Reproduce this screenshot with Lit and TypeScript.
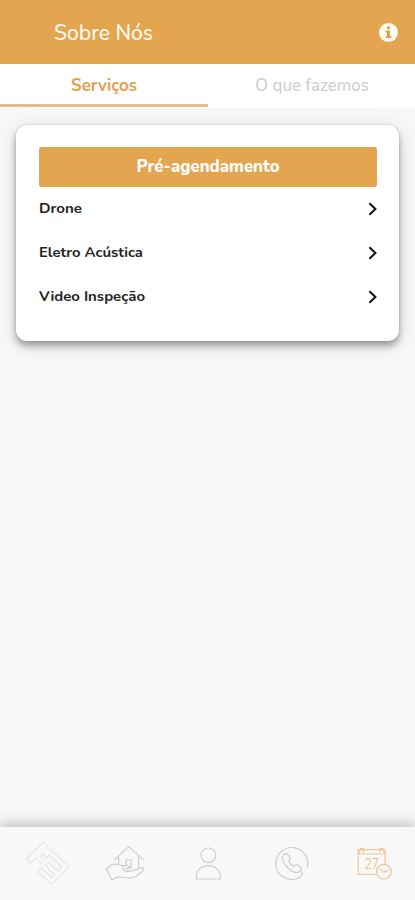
import { LitElement, html, css, svg } from "lit";
import { customElement, property, state } from "lit/decorators.js";
import { classMap } from "lit/directives/class-map.js";

const fonts = css`Nunito, "Noto Sans", "Open Sans", sans-serif`;

/* Bottom bar glyphs, drawn on a grid of three units per pixel. */
const navIcons = [
  {
    name: "Início",
    tone: "faint",
    box: "49.5 69 150 150",
    art: svg`
      <path d="M77 132 128 82 205 155 153 208 113 170 124 159 152 187 161 178 134 152 145 142 172 168 183 156 147 120 139 129 127 117 119 124 131 136 121 146 104 130 90 144Z"/>`,
  },
  {
    name: "Serviços",
    tone: "grey",
    box: "300 69 150 150",
    art: svg`
      <path d="M356 124 344 134M344 134 386 95 430 134M416 122V161M356 124V148"/>
      <path d="M378 151V135H394V158H386"/>
      <path d="M319 162 333 150Q346 145 357 150L368 152Q366 160 371 165 377 170 387 169L400 166 426 158Q433 160 429 167L410 182Q401 190 386 189L358 186Q349 185 336 195ZM368 152H382Q391 153 389 158 386 162 377 160"/>`,
  },
  {
    name: "Perfil",
    tone: "grey",
    box: "69 69 150 150",
    art: svg`
      <circle cx="145" cy="121" r="22"/>
      <path d="M109 192V186C109 166 124 152 145 152S181 166 181 186V192Z"/>`,
  },
  {
    name: "Contato",
    tone: "grey",
    box: "317.5 69 150 150",
    art: svg`
      <path d="M441 159A48 48 0 1 0 407 192C419 190 426 183 427 173"/>
      <path d="M371 119Q378 113 383 119L389 126Q392 131 386 137 388 147 401 154 407 148 412 150L421 156Q426 162 421 169 407 179 387 162 362 139 367 124Z"/>`,
  },
  {
    name: "Agenda",
    tone: "orange",
    box: "70.5 69 150 150",
    art: svg`
      <path d="M151 178H98V104H179V146M98 117H179M111 104H166"/>
      <path d="M101 114 106 100H114V112M177 114 172 100H164V112"/>
      <text class="day" x="117" y="163" textLength="44" lengthAdjust="spacingAndGlyphs">27</text>
      <circle cx="175" cy="170" r="22"/>
      <path d="M166 164 175 172 186 167"/>`,
  },
];

@customElement("service-row")
class ServiceRow extends LitElement {
  @property() label = "";
  @property({ type: Number }) span = 0;

  static styles = css`
    :host { display: flex; align-items: center; justify-content: space-between; height: 44px; }
    svg { display: block; width: 10px; height: 14px; }
    path { fill: none; stroke: #151515; stroke-width: 2.1; }
    text { font: 700 14px ${fonts}; fill: #222; }
    .text { width: 200px; height: 24px; }
  `;

  render() {
    return html`
      <svg class="text" viewBox="0 0 200 24"><text x="0" y="16.4" textLength=${this.span} lengthAdjust="spacingAndGlyphs">${this.label}</text></svg>
      <svg viewBox="0 0 10 14"><path d="M2.4 1.2 8.4 7 2.4 12.8" /></svg>
    `;
  }
}

@customElement("app-root")
class AppRoot extends LitElement {
  @state() tab = 0;

  static styles = css`
    :host { display: flex; flex-direction: column; height: 900px; overflow: hidden; background: #f8f8f8; font-family: ${fonts}; }
    svg { display: block; }
    header { display: flex; align-items: center; justify-content: space-between; box-sizing: border-box; height: 64px; padding: 0 17px 0 54px; background: #e3a54f; flex: none; }
    .title { width: 120px; height: 36px; fill: #fffaf2; font-size: 22px; font-weight: 500; }
    .info { width: 19px; height: 19px; }
    .tabs { display: flex; box-sizing: border-box; height: 44px; padding-bottom: 1px; background: #fff; flex: none; }
    .tab { flex: 1; box-sizing: border-box; border-bottom: 3px solid transparent; fill: #cfcfcf; font-size: 17px; font-weight: 500; }
    .tab svg { width: 100%; height: 40px; }
    .active { border-color: #e6bd88; fill: #e2a14c; font-weight: 700; }
    main { flex: 1; padding: 17px 16px 0; background: #f8f8f8; }
    .card { box-sizing: border-box; height: 216px; padding: 22px 22px 0 23px; border-radius: 11px; background: #fff; box-shadow: 0 5px 7px rgba(0, 0, 0, .32), 0 4px 22px rgba(0, 0, 0, .12), 0 0 2px rgba(0, 0, 0, .18); }
    .book { height: 40px; border-radius: 3px; background: #e3a54f; fill: #fff; font-size: 17px; font-weight: 800; }
    .book svg { width: 100%; height: 40px; }
    nav { position: relative; display: flex; height: 73px; flex: none; background: #f8f8f8; box-shadow: 0 -4px 12px rgba(0, 0, 0, .22); }
    .item { flex: 1; display: flex; justify-content: center; padding-top: 11px; }
    .item svg { overflow: visible; width: 50px; height: 50px; fill: none; stroke-width: 3.6; stroke-linejoin: round; stroke-linecap: round; }
    .faint { stroke: #e5e5e5; }
    .grey { stroke: #cecece; }
    .orange { stroke: #edc79b; }
    .day { font-size: 46px; font-weight: 300; fill: #e9b678; stroke: none; }
  `;

  render() {
    const tabs = [
      { label: "Serviços", x: 71, span: 66 },
      { label: "O que fazemos", x: 47, span: 114 },
    ];
    return html`
      <header>
        <svg class="title" viewBox="0 0 120 36"><text x="0" y="26" textLength="99" lengthAdjust="spacingAndGlyphs">Sobre Nós</text></svg>
        <svg class="info" viewBox="0 0 19 19">
          <circle cx="9.5" cy="9.5" r="9.5" fill="#fffaf2" />
          <path d="M8 3.4h3v2.7H8zM6.8 7.5H11v5.7h1.4v1.9H6.7v-1.9H8V9.4H6.8z" fill="#dba04c" />
        </svg>
      </header>
      <div class="tabs">
        ${tabs.map((t, i) => html`
          <div class=${classMap({ tab: true, active: this.tab === i })} @click=${() => (this.tab = i)}>
            <svg><text x=${t.x} y="27" textLength=${t.span} lengthAdjust="spacingAndGlyphs">${t.label}</text></svg>
          </div>`)}
      </div>
      <main>
        <section class="card">
          <div class="book"><svg><text x="97.5" y="25" textLength="143" lengthAdjust="spacingAndGlyphs">Pré-agendamento</text></svg></div>
          <service-row label="Drone" span="43"></service-row>
          <service-row label="Eletro Acústica" span="104"></service-row>
          <service-row label="Video Inspeção" span="106"></service-row>
        </section>
      </main>
      <nav>
        ${navIcons.map((n) => html`<div class="item" aria-label=${n.name}><svg class=${n.tone} viewBox=${n.box}>${n.art}</svg></div>`)}
      </nav>
    `;
  }
}
